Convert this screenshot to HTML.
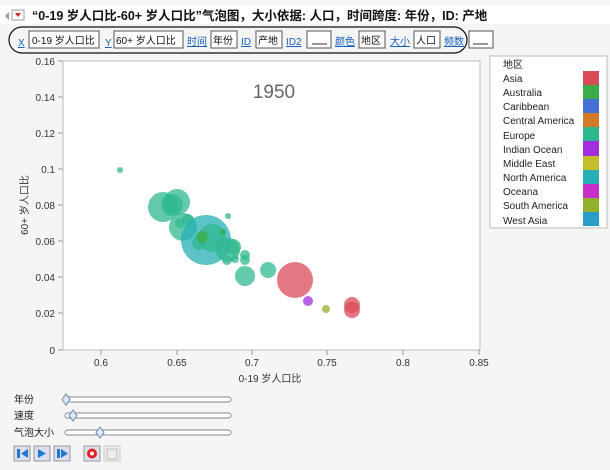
<!DOCTYPE html>
<html><head><meta charset="utf-8"><style>
body{margin:0;width:610px;height:465px;background:#f5f5f5;font-family:"Liberation Sans","Noto Sans CJK SC",sans-serif;overflow:hidden}
</style></head><body>
<svg width="610" height="465" xmlns="http://www.w3.org/2000/svg" font-family="Liberation Sans, Noto Sans CJK SC, sans-serif">
<rect x="0" y="0" width="610" height="465" fill="#f5f5f5"/>
<rect x="0" y="6" width="610" height="18" fill="#fff"/>
<polygon points="5,16 9,12 9,20" fill="#999"/>
<rect x="12" y="10" width="12" height="10" fill="#fff" stroke="#999"/>
<polygon points="15,13 21,13 18,17" fill="#d22"/>
<text x="32" y="20" font-size="12.5" font-weight="bold" fill="#111">“0-19 岁人口比-60+ 岁人口比”气泡图，大小依据: 人口，时间跨度: 年份，ID: 产地</text>
<rect x="9" y="27" width="458" height="26" rx="13" fill="none" stroke="#111" stroke-width="1.2"/>
<g font-size="10" fill="#1560c0" text-decoration="underline">
<text x="18" y="46">X</text><text x="105" y="46">Y</text><text x="187" y="45">时间</text>
<text x="241" y="45">ID</text><text x="286" y="45">ID2</text><text x="335" y="45">颜色</text><text x="390" y="45">大小</text><text x="444" y="45">频数</text></g>
<g fill="#fff" stroke="#555"><rect x="29" y="31" width="70" height="17"/><rect x="114" y="31" width="69" height="17"/><rect x="211" y="31" width="26" height="17"/><rect x="256" y="31" width="26" height="17"/><rect x="307" y="31" width="24" height="17"/><rect x="359" y="31" width="26" height="17"/><rect x="414" y="31" width="26" height="17"/><rect x="469" y="31" width="24" height="17"/></g>
<g font-size="10" fill="#111"><text x="32" y="44">0-19 岁人口比</text><text x="116" y="44">60+ 岁人口比</text><text x="213" y="44">年份</text><text x="258" y="44">产地</text><text x="361" y="44">地区</text><text x="416" y="44">人口</text></g>
<line x1="312" y1="44" x2="327" y2="44" stroke="#333"/><line x1="473" y1="44" x2="488" y2="44" stroke="#333"/>
<rect x="63" y="61" width="417" height="289" fill="#fff" stroke="#bbb"/>
<g font-size="10" fill="#333" text-anchor="end">
<text x="55" y="65">0.16</text><text x="55" y="101">0.14</text><text x="55" y="137">0.12</text><text x="55" y="173">0.1</text><text x="55" y="209">0.08</text><text x="55" y="245">0.06</text><text x="55" y="281">0.04</text><text x="55" y="317">0.02</text><text x="55" y="354">0</text></g>
<g stroke="#999"><line x1="58" y1="61" x2="63" y2="61"/><line x1="58" y1="97" x2="63" y2="97"/><line x1="58" y1="133" x2="63" y2="133"/><line x1="58" y1="169" x2="63" y2="169"/><line x1="58" y1="205" x2="63" y2="205"/><line x1="58" y1="241" x2="63" y2="241"/><line x1="58" y1="277" x2="63" y2="277"/><line x1="58" y1="313" x2="63" y2="313"/><line x1="58" y1="350" x2="63" y2="350"/>
<line x1="101" y1="350" x2="101" y2="355"/><line x1="177" y1="350" x2="177" y2="355"/><line x1="252" y1="350" x2="252" y2="355"/><line x1="327" y1="350" x2="327" y2="355"/><line x1="403" y1="350" x2="403" y2="355"/><line x1="479" y1="350" x2="479" y2="355"/></g>
<g font-size="10" fill="#333" text-anchor="middle"><text x="101" y="366">0.6</text><text x="177" y="366">0.65</text><text x="252" y="366">0.7</text><text x="327" y="366">0.75</text><text x="403" y="366">0.8</text><text x="479" y="366">0.85</text>
<text x="270" y="382">0-19 岁人口比</text></g>
<text transform="translate(28,205) rotate(-90)" font-size="10" fill="#333" text-anchor="middle">60+ 岁人口比</text>
<text x="274" y="98" font-size="19" fill="#666" text-anchor="middle">1950</text>
<g fill-opacity="0.75">
<circle cx="120" cy="170" r="3" fill="#2fb890"/>
<circle cx="183" cy="227" r="14" fill="#2fb890"/>
<circle cx="163" cy="207" r="15" fill="#2fb890"/>
<circle cx="177" cy="202" r="13" fill="#2fb890"/>
<circle cx="172" cy="205" r="11" fill="#2fb890"/>
<circle cx="188" cy="220" r="6" fill="#2fb890"/>
<circle cx="180" cy="223" r="5" fill="#2fb890"/>
<circle cx="206" cy="240" r="25" fill="#26b0b5"/>
<circle cx="212" cy="238" r="14" fill="#2fb890"/>
<circle cx="199" cy="243" r="7" fill="#2fb890"/>
<circle cx="202" cy="237" r="6" fill="#3aac48"/>
<circle cx="228" cy="216" r="3" fill="#2fb890"/>
<circle cx="223" cy="232" r="3" fill="#3aac48"/>
<circle cx="228" cy="250" r="12" fill="#2fb890"/>
<circle cx="233" cy="247" r="8" fill="#2fb890"/>
<circle cx="227" cy="260" r="5" fill="#2fb890"/>
<circle cx="235" cy="259" r="4" fill="#2fb890"/>
<circle cx="245" cy="255" r="5" fill="#2fb890"/>
<circle cx="245" cy="260" r="5" fill="#2fb890"/>
<circle cx="245" cy="276" r="10" fill="#2fb890"/>
<circle cx="268" cy="270" r="8" fill="#2fb890"/>
<circle cx="295" cy="280" r="18" fill="#d94a58"/>
<circle cx="308" cy="301" r="5" fill="#a22ee0"/>
<circle cx="326" cy="309" r="4" fill="#93b02c"/>
<circle cx="352" cy="305" r="8" fill="#d94a58"/>
<circle cx="352" cy="310" r="8" fill="#d94a58"/>
</g>
<rect x="490" y="56" width="117" height="172" fill="#fff" stroke="#bbb"/>
<g font-size="10" fill="#222"><text x="503" y="68">地区</text>
<text x="503" y="82">Asia</text><text x="503" y="96">Australia</text><text x="503" y="110">Caribbean</text><text x="503" y="124">Central America</text><text x="503" y="139">Europe</text><text x="503" y="153">Indian Ocean</text><text x="503" y="167">Middle East</text><text x="503" y="181">North America</text><text x="503" y="195">Oceana</text><text x="503" y="209">South America</text><text x="503" y="224">West Asia</text></g>
<rect x="583" y="71" width="16" height="15" fill="#d94a58"/><rect x="583" y="85" width="16" height="15" fill="#3aac48"/><rect x="583" y="99" width="16" height="15" fill="#4470d8"/><rect x="583" y="113" width="16" height="15" fill="#d57a28"/><rect x="583" y="127" width="16" height="15" fill="#2fb890"/><rect x="583" y="141" width="16" height="15" fill="#a22ee0"/><rect x="583" y="156" width="16" height="15" fill="#c4bd2c"/><rect x="583" y="170" width="16" height="15" fill="#26b0b5"/><rect x="583" y="184" width="16" height="15" fill="#c82ec8"/><rect x="583" y="198" width="16" height="15" fill="#93b02c"/><rect x="583" y="212" width="16" height="14" fill="#2a9ec8"/>
<g font-size="10" fill="#222"><text x="14" y="403">年份</text><text x="14" y="419">速度</text><text x="14" y="436">气泡大小</text></g>
<g fill="#fff" stroke="#888"><rect x="65" y="397" width="166" height="5" rx="2.5"/><rect x="65" y="413" width="166" height="5" rx="2.5"/><rect x="65" y="430" width="166" height="5" rx="2.5"/></g>
<g fill="#dde8f5" stroke="#6a8ab5"><polygon points="66,394 70,399.5 66,405 62,399.5"/><polygon points="73,410 77,415.5 73,421 69,415.5"/><polygon points="100,427 104,432.5 100,438 96,432.5"/></g>
<g fill="#dde" stroke="#999"><rect x="14" y="446" width="16" height="15"/><rect x="34" y="446" width="16" height="15"/><rect x="54" y="446" width="16" height="15"/><rect x="84" y="446" width="16" height="15"/><rect x="104" y="446" width="16" height="15" fill="#eee" stroke="#ccc"/></g>
<g fill="#1e7ad0"><rect x="17" y="449" width="3" height="9"/><polygon points="28,449 21,453.5 28,458"/><polygon points="38,449 46,453.5 38,458"/><rect x="57" y="449" width="3" height="9"/><polygon points="61,449 68,453.5 61,458"/></g>
<circle cx="92" cy="453.5" r="5" fill="#d22"/><circle cx="92" cy="453.5" r="2" fill="#fff"/>
<rect x="107" y="449" width="10" height="10" fill="none" stroke="#bbb"/>
</svg>
</body></html>
